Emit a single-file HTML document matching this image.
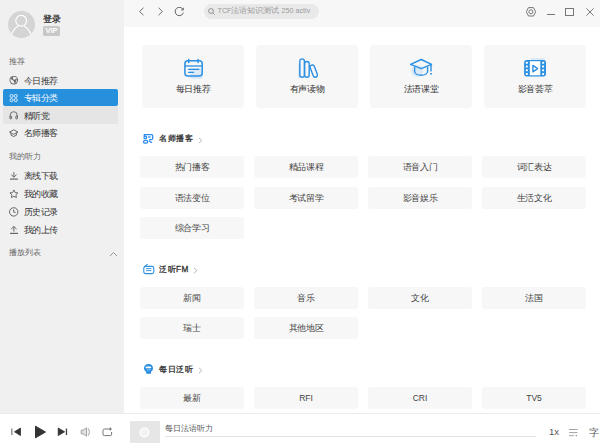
<!DOCTYPE html>
<html><head><meta charset="utf-8">
<style>
*{margin:0;padding:0;box-sizing:border-box}
html,body{width:600px;height:443px;overflow:hidden;background:#fff;font-family:"Liberation Sans",sans-serif;color:#333}
.abs{position:absolute}
#side{position:absolute;left:0;top:0;width:124px;height:413px;background:#f0f0f0}
#top{position:absolute;left:124px;top:0;width:476px;height:26.6px;background:#f7f7f7}
#bottom{position:absolute;left:0;top:413px;width:600px;height:30px;background:#fff;border-top:1px solid #ebebeb}
.lbl{position:absolute;left:9px;font-size:7.5px;color:#666;line-height:10px;white-space:nowrap;margin-top:0.3px}
.item{position:absolute;left:3px;width:115px;height:17px;font-size:8.5px;line-height:17px;color:#333;border-radius:2px;white-space:nowrap}
.item .t{position:absolute;left:20.5px;top:1.4px}
.item svg{position:absolute;left:6px;top:3.5px}
.item.active{background:#2790dd;color:#fff}
.item.hover{background:#e5e5e5;border-radius:1px;height:17.3px}
.card{position:absolute;top:44.5px;width:102px;height:63px;background:#f7f7f7;border-radius:4px;text-align:center}
.card .t{position:absolute;left:0;right:0;top:39.5px;font-size:8.5px;line-height:11px;color:#333}
.card svg{position:absolute;left:40px;top:13px}
.btn{position:absolute;width:104px;height:21.8px;background:#f7f7f7;border-radius:3px;font-size:8.5px;line-height:22px;text-align:center;color:#444;white-space:nowrap}
.sec{position:absolute;left:143px;font-size:8.2px;font-weight:normal;-webkit-text-stroke:0.3px #333;letter-spacing:0.5px;color:#333;line-height:12px;height:12px}
.sec .t{position:absolute;left:16px;top:0.8px;white-space:nowrap}
.q{letter-spacing:-0.4px}
.sec svg{position:absolute;left:0;top:0}
</style></head><body>
<div id="side">
  <div class="abs" style="left:7.5px;top:11px;width:27px;height:27px;border-radius:50%;background:#d4d4d4;overflow:hidden">
    <svg width="27" height="27" viewBox="0 0 27 27"><circle cx="13.2" cy="9.8" r="5.4" fill="none" stroke="#fff" stroke-width="1.2"/><path d="M3.4 23.6 C5 19 8 16.2 10.3 14.9 M23 23.6 C21.4 19 18.4 16.2 16.1 14.9" fill="none" stroke="#fff" stroke-width="1.2"/></svg>
  </div>
  <div class="abs" style="left:43px;top:13.5px;font-size:8.5px;line-height:11px;color:#333;-webkit-text-stroke:0.3px #333;letter-spacing:-0.2px">登录</div>
  <div class="abs" style="left:43px;top:26px;width:17px;height:9.5px;background:#c8c8c8;border-radius:1.5px;color:#fff;font-size:7.5px;font-weight:bold;line-height:9.5px;text-align:center">VIP</div>

  <div class="lbl" style="top:57px">推荐</div>
  <div class="item" style="top:72px"><svg width="11" height="11" viewBox="0 0 11 11"><circle cx="4.8" cy="4.1" r="4.3" fill="#666"/><circle cx="4.8" cy="4.1" r="3.4" fill="#f0f0f0"/><path d="M1.6 2 C2.6 1 3.6 0.8 4 1.4 C4.4 2 3.6 2.8 4.6 3.4 C5.6 4 6.6 3.4 7.2 2.6 L8 3.2 C7.6 5.4 6.8 6.4 5.6 7.4 C5.2 6.2 5 5.4 4.2 4.6 C3.2 3.6 2 3.6 1.6 2 Z" fill="#666"/><circle cx="4.9" cy="2.4" r="0.8" fill="#f0f0f0"/><circle cx="7.3" cy="4.2" r="0.55" fill="#f0f0f0"/></svg><span class="t q">今日推荐</span></div>
  <div class="item active" style="top:89px"><svg width="11" height="11" viewBox="0 0 11 11" fill="none" stroke="#fff" stroke-width="0.85"><rect x="1.1" y="1.5" width="2.9" height="2.9" rx="1.2"/><rect x="5.3" y="1.5" width="2.9" height="2.9" rx="1.2"/><rect x="1.1" y="5.7" width="2.9" height="2.9" rx="1.2"/><rect x="5.3" y="5.7" width="2.9" height="2.9" rx="1.2"/></svg><span class="t q">专辑分类</span></div>
  <div class="item hover" style="top:106.3px"><svg width="11" height="11" viewBox="0 0 11 11" fill="none" stroke="#666" stroke-width="0.95"><path d="M1.2 7.6 V5.2 A3.5 3.5 0 0 1 8.2 5.2 V7.6"/><rect x="0.9" y="6" width="1.7" height="3" rx="0.8"/><rect x="6.8" y="6" width="1.7" height="3" rx="0.8"/></svg><span class="t q">精听党</span></div>
  <div class="item" style="top:124px"><svg width="11" height="11" viewBox="0 0 11 11" fill="none" stroke="#666" stroke-width="1"><path d="M0.5 4.1 L4.7 1.8 L9 4.1 L4.7 6.3 Z" stroke-linejoin="round"/><path d="M2 5 V7.2 Q4.7 9.8 7.4 7.2 V5"/></svg><span class="t q">名师播客</span></div>

  <div class="lbl" style="top:152px">我的听力</div>
  <div class="item" style="top:167px"><svg width="11" height="11" viewBox="0 0 11 11" fill="none" stroke="#666" stroke-width="1"><path d="M4.9 1.1 V6.1 M2.2 3.6 L4.9 6.2 L7.6 3.6"/><path d="M1 8.1 H8.9" stroke-width="1.2"/></svg><span class="t q">离线下载</span></div>
  <div class="item" style="top:185px"><svg width="11" height="11" viewBox="0 0 11 11" fill="none" stroke="#666" stroke-width="0.95" stroke-linejoin="round"><path d="M4.9 0.9 L6.1 3.5 L8.9 3.9 L6.9 5.8 L7.4 8.6 L4.9 7.3 L2.4 8.6 L2.9 5.8 L0.9 3.9 L3.7 3.5 Z"/></svg><span class="t q">我的收藏</span></div>
  <div class="item" style="top:203px"><svg width="11" height="11" viewBox="0 0 11 11" fill="none" stroke="#666" stroke-width="1"><circle cx="4.7" cy="4.9" r="4.2"/><path d="M4.7 2.5 V5.2 L6.6 5.4"/></svg><span class="t q">历史记录</span></div>
  <div class="item" style="top:221px"><svg width="11" height="11" viewBox="0 0 11 11" fill="none" stroke="#666" stroke-width="1"><path d="M4.9 1.6 V6.6 M2.2 4.1 L4.9 1.5 L7.6 4.1"/><path d="M1 8.4 H9" stroke-width="1.2"/></svg><span class="t q">我的上传</span></div>

  <div class="lbl" style="top:248px">播放列表</div>
  <svg class="abs" style="left:109px;top:250.6px" width="9" height="6" viewBox="0 0 9 6"><path d="M1 5 L4.5 1.5 L8 5" fill="none" stroke="#999" stroke-width="1"/></svg>
</div>

<div id="top">
  <svg class="abs" style="left:14px;top:7px" width="7" height="10" viewBox="0 0 7 10"><path d="M5.5 0.8 L1.5 4.5 L5.5 8.2" fill="none" stroke="#707070" stroke-width="1"/></svg>
  <svg class="abs" style="left:33px;top:7px" width="7" height="10" viewBox="0 0 7 10"><path d="M1.5 0.8 L5.5 4.5 L1.5 8.2" fill="none" stroke="#707070" stroke-width="1"/></svg>
  <svg class="abs" style="left:50px;top:7px" width="11" height="10" viewBox="0 0 11 10"><path d="M9 2.4 A4.2 4.2 0 1 0 9.4 5.6" fill="none" stroke="#666" stroke-width="1"/><path d="M9.3 0.8 L9.3 3 L7.1 3" fill="none" stroke="#666" stroke-width="1"/></svg>
  <div class="abs" style="left:80px;top:4px;width:115px;height:14.5px;border-radius:7.5px;background:#e9e9e9"></div>
  <svg class="abs" style="left:84px;top:8px" width="7" height="7" viewBox="0 0 7 7"><circle cx="3" cy="3" r="2.4" fill="none" stroke="#888" stroke-width="0.9"/><path d="M4.8 4.8 L6.5 6.5" stroke="#888" stroke-width="0.9"/></svg>
  <div class="abs" style="left:93.5px;top:6px;font-size:8px;line-height:10px;color:#999;white-space:nowrap"><span style="font-size:7.2px">TCF</span>法语知识测试<span style="font-size:7.2px"> 250 activ</span></div>
  <svg class="abs" style="left:402px;top:7px" width="11" height="10" viewBox="0 0 11 10"><path d="M2.5 0.6 H7.5 L9.7 4.8 L7.5 9 H2.5 L0.3 4.8 Z" fill="none" stroke="#777" stroke-width="1" stroke-linejoin="round"/><circle cx="4.9" cy="4.8" r="2" fill="none" stroke="#777" stroke-width="1"/></svg>
  <div class="abs" style="left:422.5px;top:14px;width:8.5px;height:1.3px;background:#777"></div>
  <div class="abs" style="left:441px;top:7.5px;width:8.6px;height:8.6px;border:1px solid #777"></div>
  <svg class="abs" style="left:462px;top:8px" width="8" height="8" viewBox="0 0 8 8"><path d="M0.4 0.4 L7.6 7.6 M7.6 0.4 L0.4 7.6" stroke="#777" stroke-width="1"/></svg>
</div>

<!-- cards -->
<div class="card" style="left:142px"><svg width="22" height="22" viewBox="0 0 22 22" style="left:40px;top:13.5px">
  <rect x="8" y="10" width="13" height="11" rx="2" fill="#dceaf7"/>
  <rect x="2.9" y="2.8" width="17.3" height="15.2" rx="3" fill="none" stroke="#2b8fe2" stroke-width="1.5"/>
  <path d="M6.7 1.4 V4.6 M16 1.4 V4.6" stroke="#2b8fe2" stroke-width="1.5" stroke-linecap="round"/>
  <path d="M2.9 8 H20.2" stroke="#2b8fe2" stroke-width="1.3"/>
  <path d="M6.5 11.3 H16.8 M6.5 14.3 H11.5" stroke="#2b8fe2" stroke-width="1.3" stroke-linecap="round"/>
</svg><div class="t"><span class="q">每日推荐</span></div></div>
<div class="card" style="left:256px"><svg width="22" height="22" viewBox="0 0 22 22" style="left:40px;top:13.5px">
  <rect x="2" y="6" width="3" height="14" fill="#dceaf7"/>
  <rect x="3.8" y="0.9" width="4.6" height="18.3" rx="2.3" fill="none" stroke="#2b8fe2" stroke-width="1.4"/>
  <rect x="8.6" y="3.5" width="4.6" height="15.7" rx="2.3" fill="none" stroke="#2b8fe2" stroke-width="1.4"/>
  <rect x="15.6" y="6.8" width="4.4" height="12.6" rx="2.2" fill="none" stroke="#2b8fe2" stroke-width="1.4" transform="rotate(-21 17.8 13.1)"/>
</svg><div class="t"><span class="q">有声读物</span></div></div>
<div class="card" style="left:370px"><svg width="24" height="22" viewBox="0 0 24 22" style="left:39px;top:13.5px">
  <circle cx="8.2" cy="13" r="6" fill="#dceaf7"/>
  <path d="M1.6 6.3 L12.2 1.5 L22.6 6.3 L12.2 10.6 Z" fill="none" stroke="#2b8fe2" stroke-width="1.4" stroke-linejoin="round"/>
  <path d="M5.6 9 V13.2 C5.6 18.6 18.6 18.6 18.6 13.2 V9" fill="none" stroke="#2b8fe2" stroke-width="1.4"/>
  <path d="M22 6.5 V13.6" stroke="#2b8fe2" stroke-width="1.4"/>
  <rect x="21.2" y="15" width="1.6" height="1.6" fill="#2b8fe2"/>
</svg><div class="t"><span class="q">法语课堂</span></div></div>
<div class="card" style="left:484px"><svg width="24" height="22" viewBox="0 0 24 22" style="left:39px;top:13.5px">
  <rect x="7.8" y="0" width="13.9" height="3" fill="#dceaf7"/>
  <rect x="1.1" y="2.1" width="21.9" height="16.3" rx="2.6" fill="#2b8fe2"/>
  <rect x="6.8" y="3.2" width="10.5" height="14.1" fill="#fff"/>
  <g fill="#fff"><rect x="2.8" y="3.8" width="2" height="2" rx="0.5"/><rect x="2.8" y="7.6" width="2" height="2" rx="0.5"/><rect x="2.8" y="11.3" width="2" height="2" rx="0.5"/><rect x="2.8" y="15" width="2" height="2" rx="0.5"/>
  <rect x="19.1" y="3.8" width="2" height="2" rx="0.5"/><rect x="19.1" y="7.6" width="2" height="2" rx="0.5"/><rect x="19.1" y="11.3" width="2" height="2" rx="0.5"/><rect x="19.1" y="15" width="2" height="2" rx="0.5"/></g>
  <path d="M9.9 7.4 L14.6 10.6 L9.9 13.8 Z" fill="none" stroke="#2b8fe2" stroke-width="1.4" stroke-linejoin="round"/>
</svg><div class="t"><span class="q">影音荟萃</span></div></div>

<div class="sec" style="top:132.5px"><svg width="12" height="12" viewBox="0 0 12 12" fill="none" stroke="#2a8cf0" stroke-width="1.25">
  <path d="M1.3 3.2 V1.6 H8.3 A1.4 1.4 0 0 1 9.7 3 V5.2 A1.4 1.4 0 0 1 8.3 6.6 H6"/>
  <circle cx="2.3" cy="4.4" r="1.3"/>
  <rect x="0.6" y="7.3" width="4.1" height="2.8" rx="1.3"/>
  <path d="M4.9 4 H7.6"/>
  <path d="M6 7.9 L9 9.7"/>
</svg><span class="t">名师播客</span>
<svg class="abs" style="left:54.5px;top:4px" width="5" height="7" viewBox="0 0 5 7"><path d="M1 0.8 L3.8 3.5 L1 6.2" fill="none" stroke="#aaa" stroke-width="0.9"/></svg></div>
<div class="btn" style="left:140px;top:156.2px"><span class="q">热门播客</span></div>
<div class="btn" style="left:254px;top:156.2px"><span class="q">精品课程</span></div>
<div class="btn" style="left:368px;top:156.2px"><span class="q">语音入门</span></div>
<div class="btn" style="left:482px;top:156.2px"><span class="q">词汇表达</span></div>
<div class="btn" style="left:140px;top:187px"><span class="q">语法变位</span></div>
<div class="btn" style="left:254px;top:187px"><span class="q">考试留学</span></div>
<div class="btn" style="left:368px;top:187px"><span class="q">影音娱乐</span></div>
<div class="btn" style="left:482px;top:187px"><span class="q">生活文化</span></div>
<div class="btn" style="left:140px;top:217px"><span class="q">综合学习</span></div>

<div class="sec" style="top:263px"><svg width="12" height="12" viewBox="0 0 12 12">
  <rect x="0.8" y="3.4" width="10" height="7.2" rx="1.8" fill="none" stroke="#2b8fe2" stroke-width="1.1"/>
  <path d="M1.8 3.6 L4.2 1.4" stroke="#2b8fe2" stroke-width="1.1" stroke-linecap="round"/>
  <path d="M3 5.6 H8.4 M3 7.6 H8.4" stroke="#2b8fe2" stroke-width="0.9"/>
</svg><span class="t">泛听FM</span>
<svg class="abs" style="left:50px;top:4px" width="5" height="7" viewBox="0 0 5 7"><path d="M1 0.8 L3.8 3.5 L1 6.2" fill="none" stroke="#aaa" stroke-width="0.9"/></svg></div>
<div class="btn" style="left:140px;top:287px"><span class="q">新闻</span></div>
<div class="btn" style="left:254px;top:287px"><span class="q">音乐</span></div>
<div class="btn" style="left:368px;top:287px"><span class="q">文化</span></div>
<div class="btn" style="left:482px;top:287px"><span class="q">法国</span></div>
<div class="btn" style="left:140px;top:317px"><span class="q">瑞士</span></div>
<div class="btn" style="left:254px;top:317px"><span class="q">其他地区</span></div>

<div class="sec" style="top:363px"><svg width="12" height="12" viewBox="0 0 12 12">
  <path d="M5.5 1 C8.5 1 10 3 10 5.3 C10 7.2 9 8.2 8 8.6 V10.8 H3.2 V8.8 C1.9 8 1 6.8 1 5.2 C1 2.8 2.8 1 5.5 1 Z" fill="#2b8fe2"/>
  <rect x="2.6" y="3.6" width="5.6" height="1.6" rx="0.8" fill="#fff"/>
  <path d="M3.6 6.6 Q5.5 7.6 7.4 6.6" stroke="#bcdaf5" stroke-width="0.8" fill="none"/>
</svg><span class="t">每日泛听</span>
<svg class="abs" style="left:54.5px;top:4px" width="5" height="7" viewBox="0 0 5 7"><path d="M1 0.8 L3.8 3.5 L1 6.2" fill="none" stroke="#aaa" stroke-width="0.9"/></svg></div>
<div class="btn" style="left:140px;top:387px"><span class="q">最新</span></div>
<div class="btn" style="left:254px;top:387px">RFI</div>
<div class="btn" style="left:368px;top:387px">CRI</div>
<div class="btn" style="left:482px;top:387px">TV5</div>

<div id="bottom">
  <svg class="abs" style="left:10px;top:13px" width="12" height="10" viewBox="0 0 12 10"><rect x="1" y="1.5" width="1.6" height="6.5" fill="#999"/><path d="M10.5 1 L4.5 4.8 L10.5 8.6 Z" fill="#333" stroke="#333" stroke-width="0.8" stroke-linejoin="round"/></svg>
  <svg class="abs" style="left:34px;top:11px" width="13" height="14" viewBox="0 0 13 14"><path d="M1.5 1.2 L11.5 7 L1.5 12.8 Z" fill="#333" stroke="#333" stroke-width="1" stroke-linejoin="round"/></svg>
  <svg class="abs" style="left:57px;top:13px" width="12" height="10" viewBox="0 0 12 10"><path d="M1.2 1 L7.6 4.8 L1.2 8.6 Z" fill="#333" stroke="#333" stroke-width="0.8" stroke-linejoin="round"/><rect x="8.8" y="1.5" width="1.3" height="6.5" fill="#444"/></svg>
  <svg class="abs" style="left:80px;top:12px" width="12" height="12" viewBox="0 0 12 12"><path d="M1.2 4.2 H3 L6.6 1.8 V10.2 L3 7.8 H1.2 Z" fill="#e2e2e2" stroke="#999" stroke-width="0.9" stroke-linejoin="round"/><path d="M8.4 2.4 Q10.6 6 8.4 9.6" fill="none" stroke="#999" stroke-width="0.9"/></svg>
  <svg class="abs" style="left:101.5px;top:12px" width="12" height="12" viewBox="0 0 12 12" fill="none" stroke="#777" stroke-width="1"><path d="M9.6 6 V8.2 A1.4 1.4 0 0 1 8.2 9.6 H2.4 A1.4 1.4 0 0 1 1 8.2 V4.4 A1.4 1.4 0 0 1 2.4 3 H8.6"/><path d="M8 1.6 L9.6 3 L8 4.4 Z" fill="#777" stroke-width="0.6"/></svg>
  <div class="abs" style="left:130px;top:7.3px;width:29.5px;height:23px;background:#e6e6e6"></div>
  <svg class="abs" style="left:138px;top:11.5px" width="13" height="13" viewBox="0 0 13 13"><circle cx="6.5" cy="6.5" r="4.4" fill="#f2f2f2" stroke="#fff" stroke-width="1.2"/></svg>
  <div class="abs" style="left:165px;top:8.6px;font-size:8px;line-height:11px;color:#555;white-space:nowrap">每日法语听力</div>
  <div class="abs" style="left:165px;top:22px;width:371px;height:1.4px;background:#e0e2ea"></div>
  <div class="abs" style="left:549px;top:12.3px;font-size:9.5px;line-height:11px;color:#555">1x</div>
  <svg class="abs" style="left:569px;top:15px" width="10" height="9" viewBox="0 0 10 9"><path d="M0 0.5 H8.5 M0 3.6 H8.5 M0 6.7 H5" fill="none" stroke="#8a8a8a" stroke-width="0.8"/><path d="M6.3 5.9 L8.3 5.9 L7.3 7.4 Z" fill="#8a8a8a"/></svg>
  <div class="abs" style="left:589px;top:12.5px;font-size:10px;line-height:11px;color:#555">字</div>
</div>
</body></html>
